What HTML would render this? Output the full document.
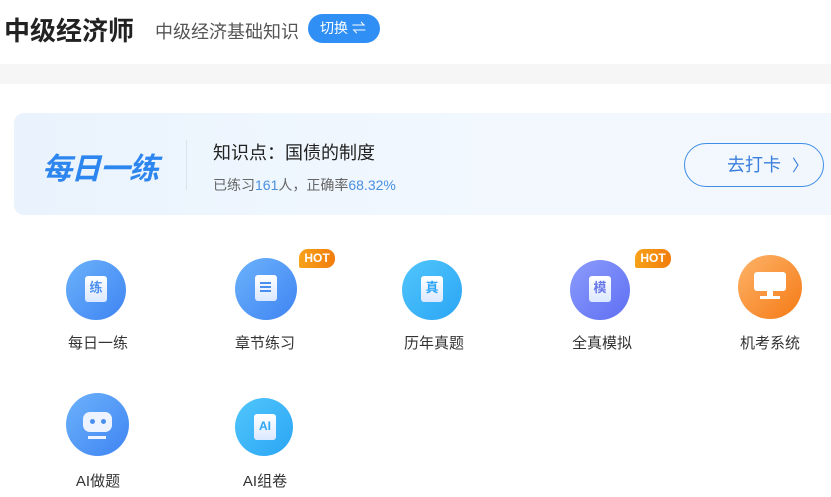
<!DOCTYPE html>
<html><head><meta charset="utf-8"><style>
*{margin:0;padding:0;box-sizing:border-box}
body{width:831px;height:497px;overflow:hidden;background:#fff;font-family:"Liberation Sans","Noto Sans CJK SC",sans-serif;position:relative}
.a{position:absolute}
.t{left:4px;top:11px;font-size:26px;font-weight:bold;color:#222;letter-spacing:0px}
.s{left:155px;top:18px;font-size:18px;color:#555}
.sw{left:308px;top:14px;width:72px;height:29px;border-radius:15px;background:#2f8ff5;color:#fff;font-size:14px;line-height:29px;padding-left:12px}
.band{left:0;top:64px;width:831px;height:20px;background:#f6f6f6}
.card{left:14px;top:113px;width:830px;height:102px;border-radius:10px;background:linear-gradient(90deg,#eaf3fd,#f2f8fe 60%,#f1f7fd)}
.dy{left:42px;top:144px;font-size:30px;font-weight:bold;font-style:italic;color:#2d86ef;letter-spacing:-1px}
.div{left:186px;top:140px;width:1px;height:50px;background:#d9e3ee}
.k{left:213px;top:139px;font-size:18px;color:#222}
.k2{left:213px;top:175px;font-size:14px;color:#666}
.k2 b{font-weight:normal;color:#4b8fe0}
.go{left:684px;top:143px;width:140px;height:44px;border:1px solid #3e8ee8;border-radius:22px;color:#3a7fdd;font-size:18px;line-height:42px;padding-left:42px}
.ic{width:60px;height:60px;border-radius:50%}
.lb{font-size:15px;color:#333;width:120px;text-align:center}
.hot{width:36px;height:19px;border-radius:9px 9px 9px 2px;background:linear-gradient(90deg,#f7a21a,#f27c0c);color:#fff;font-size:12px;font-weight:bold;line-height:19px;text-align:center}
.pg{position:absolute;left:19px;top:16px;width:22px;height:26px;border-radius:3px;background:linear-gradient(#fff,#dbe8ff);color:#4a8ef0;font-size:13px;font-weight:bold;text-align:center;line-height:24px}
</style></head><body>
<div class="a t">中级经济师</div>
<div class="a s">中级经济基础知识</div>
<div class="a sw">切换 ⇌</div>
<div class="a band"></div>
<div class="a card"></div>
<div class="a dy">每日一练</div>
<div class="a div"></div>
<div class="a k">知识点：国债的制度</div>
<div class="a k2">已练习<b>161</b>人，正确率<b>68.32%</b></div>
<div class="a go">去打卡 <span style="font-size:16px;margin-left:6px">〉</span></div>

<div class="a ic" style="left:66px;top:260px;background:linear-gradient(135deg,#6bb2fb,#3f84f2)"><div class="pg">练</div></div>
<div class="a ic" style="left:235px;top:258px;width:62px;height:62px;background:linear-gradient(135deg,#6cb2fb,#3f84f2)"><div class="pg" style="left:20px;top:17px"><span style="display:block;margin:7px 5px;height:2px;width:11px;background:#4a8ef0;box-shadow:0 4px #4a8ef0,0 8px #4a8ef0"></span></div></div>
<div class="a ic" style="left:402px;top:260px;background:linear-gradient(135deg,#51c6fb,#2ba5f5)"><div class="pg" style="color:#2ba5f5">真</div></div>
<div class="a ic" style="left:570px;top:260px;background:linear-gradient(135deg,#8b9cfb,#5f6ff3)"><div class="pg" style="color:#6a78e8">模</div></div>
<div class="a ic" style="left:738px;top:255px;width:64px;height:64px;background:linear-gradient(135deg,#fdb36a,#f57a14)"><div style="position:absolute;left:16px;top:17px;width:32px;height:19px;border-radius:3px;background:#fff"></div><div style="position:absolute;left:29px;top:36px;width:6px;height:5px;background:#fff"></div><div style="position:absolute;left:22px;top:41px;width:20px;height:3px;background:#fff"></div></div>
<div class="a ic" style="left:66px;top:393px;width:63px;height:63px;background:linear-gradient(135deg,#6cb2fb,#3f84f2)"><div style="position:absolute;left:17px;top:19px;width:29px;height:20px;border-radius:7px;background:#eef4ff"></div><div style="position:absolute;left:24px;top:26px;width:5px;height:5px;border-radius:50%;background:#4a8ef0;box-shadow:11px 0 #4a8ef0"></div><div style="position:absolute;left:22px;top:43px;width:18px;height:3px;background:#eef4ff"></div></div>
<div class="a ic" style="left:235px;top:398px;width:58px;height:58px;background:linear-gradient(135deg,#51c6fb,#2ba5f5)"><div class="pg" style="color:#2ba5f5;font-size:12px">AI</div></div>

<div class="a hot" style="left:299px;top:249px">HOT</div>
<div class="a hot" style="left:635px;top:249px">HOT</div>

<div class="a lb" style="left:38px;top:332px">每日一练</div>
<div class="a lb" style="left:205px;top:332px">章节练习</div>
<div class="a lb" style="left:374px;top:332px">历年真题</div>
<div class="a lb" style="left:542px;top:332px">全真模拟</div>
<div class="a lb" style="left:710px;top:332px">机考系统</div>
<div class="a lb" style="left:38px;top:470px">AI做题</div>
<div class="a lb" style="left:205px;top:470px">AI组卷</div>
</body></html>
